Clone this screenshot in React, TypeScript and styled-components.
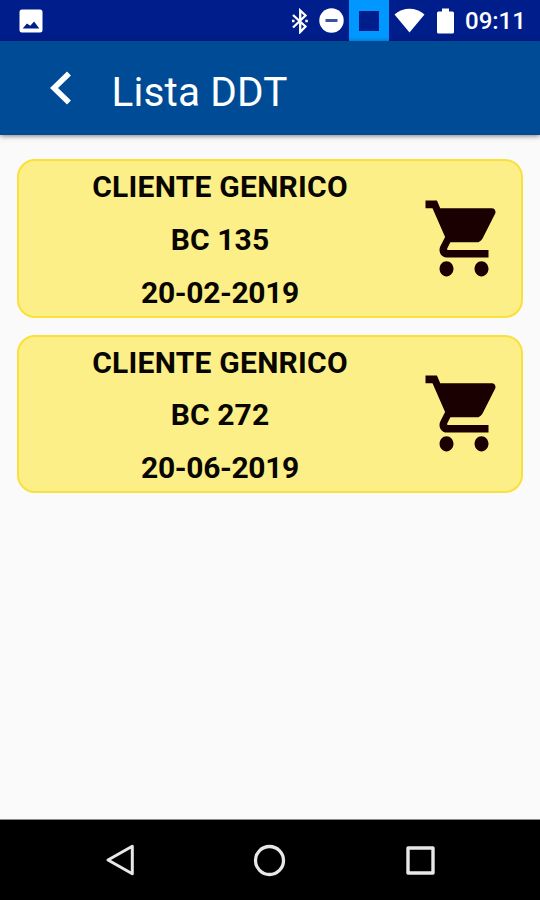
import React from 'react';
import styled, { createGlobalStyle } from 'styled-components';

const GlobalStyle = createGlobalStyle`
  * { box-sizing: border-box; }
  body { margin: 0; background: #fafafa; font-family: Roboto, sans-serif; }
`;

const Screen = styled.div`
  display: flex;
  flex-direction: column;
  width: 540px;
  height: 900px;
  overflow: hidden;
  background: #fafafa;
`;

const StatusBar = styled.div`
  display: flex;
  align-items: center;
  height: 41px;
  flex: none;
  padding-left: 19px;
  background: #001d8c;
  color: #fff;
`;

const StatusIcons = styled.div`
  display: flex;
  align-items: center;
  height: 100%;
  margin-left: auto;
`;

const Glyph = styled.svg<{ $left?: number }>`
  display: block;
  flex: none;
  margin-left: ${(p) => p.$left ?? 0}px;
`;

const RecordTile = styled.div`
  display: flex;
  align-items: center;
  justify-content: center;
  width: 40px;
  height: 41px;
  margin-left: 5px;
  background: #0098ff;
`;

const RecordSquare = styled.div`
  width: 20px;
  height: 20px;
  background: #001d8c;
`;

const Clock = styled.span`
  width: 75px;
  margin-left: 11px;
  padding-top: 2px;
  font-size: 24px;
  font-weight: 500;
  line-height: 39px;
  white-space: nowrap;
`;

const AppBar = styled.header`
  display: flex;
  align-items: center;
  height: 94px;
  flex: none;
  padding-left: 50px;
  background: #004b96;
  color: #fff;
  box-shadow: 0 1px 5px rgba(0, 0, 0, 0.5);
`;

const Title = styled.h1`
  margin: 8px 0 0 39.5px;
  font-size: 40.5px;
  font-weight: 400;
  letter-spacing: 0.15px;
  line-height: 48px;
`;

const List = styled.main`
  display: flex;
  flex: 1;
  flex-direction: column;
  gap: 17px;
  padding: 24px 17px 0;
`;

const Card = styled.article`
  display: flex;
  align-items: center;
  height: 158.5px;
  border: 2px solid #fae03c;
  border-radius: 18px;
  background: #fdef88;
`;

const Details = styled.div`
  display: flex;
  flex-direction: column;
  align-items: center;
  width: 402px;
  padding-top: 4px;
`;

const Line = styled.div<{ $tracking: number }>`
  font-size: 30px;
  font-weight: 700;
  letter-spacing: ${(p) => p.$tracking}px;
  line-height: 52.8px;
  color: #080600;
  white-space: nowrap;
`;

const NavBar = styled.nav`
  display: flex;
  align-items: center;
  height: 81px;
  flex: none;
  padding-left: 104px;
  border-top: 1px solid #8a8a8a;
  background: #000;
`;

const documents = [
  { customer: 'CLIENTE GENRICO', number: 'BC 135', date: '20-02-2019' },
  { customer: 'CLIENTE GENRICO', number: 'BC 272', date: '20-06-2019' },
];

const CartIcon = () => (
  <Glyph $left={0.6} width="84" height="91" viewBox="0 0 24 24" preserveAspectRatio="none" fill="#1a0000">
    <path d="M7 18c-1.1 0-1.99.9-1.99 2S5.9 22 7 22s2-.9 2-2-.9-2-2-2zM1 2v2h2l3.6 7.59-1.35 2.45c-.16.28-.25.61-.25.96 0 1.1.9 2 2 2h12v-2H7.42c-.14 0-.25-.11-.25-.25l.03-.12.9-1.63h7.45c.75 0 1.41-.41 1.75-1.03l3.58-6.49c.08-.14.12-.31.12-.48 0-.55-.45-1-1-1H5.21l-.94-2H1zm16 16c-1.1 0-1.99.9-1.99 2s.89 2 1.99 2 2-.9 2-2-.9-2-2-2z" />
  </Glyph>
);

export default function App() {
  return (
    <Screen>
      <GlobalStyle />
      <StatusBar>
        <Glyph width="24" height="24" viewBox="0 0 24 24">
          <path
            fill="#fff"
            fillRule="evenodd"
            d="M3 .5h18a2.500 2.500 0 0 1 2.500 2.500v18a2.500 2.500 0 0 1-2.500 2.500H3a2.500 2.500 0 0 1-2.500-2.500V3A2.500 2.500 0 0 1 3 .5zM3.700 19.500h16.600l-5.200-7-3.800 4.200-3.400-2.300z"
          />
        </Glyph>
        <StatusIcons>
          <Glyph width="18" height="26" viewBox="0 0 18 26" fill="none" stroke="#fff" strokeWidth="2.3">
            <path d="M2 7 14.500 18.500 9.200 24V2.500l5.300 5L2 19.500" />
            <path d="M1 13h2.500M14.300 13h2.500" />
          </Glyph>
          <Glyph $left={10} width="25" height="25" viewBox="0 0 25 25">
            <circle cx="12.5" cy="12.5" r="12.200" fill="#fff" />
            <path fill="#36549f" d="M6.5 11h12v3h-12z" />
          </Glyph>
          <RecordTile>
            <RecordSquare />
          </RecordTile>
          <Glyph $left={5} width="31" height="25" viewBox="0 0 31 25">
            <path fill="#fff" d="M.5 6.5C9-1.2 22-1.2 30.5 6.5L15.5 24.5z" />
          </Glyph>
          <Glyph $left={12} width="17" height="26" viewBox="0 0 17 26">
            <path fill="#fff" d="M5 .5h7v3h3.5q1.5 0 1.5 1.5v19q0 1.5-1.5 1.5h-14Q0 25.500 0 24V5q0-1.500 1.500-1.500H5z" />
          </Glyph>
          <Clock>09:11</Clock>
        </StatusIcons>
      </StatusBar>
      <AppBar>
        <Glyph width="22" height="36" viewBox="0 0 22 36" fill="none" stroke="#fff" strokeWidth="5.600">
          <path d="M19 3.500 4 18l15 14.500" />
        </Glyph>
        <Title>Lista DDT</Title>
      </AppBar>
      <List>
        {documents.map((doc) => (
          <Card key={doc.number}>
            <Details>
              <Line $tracking={0.25}>{doc.customer}</Line>
              <Line $tracking={0.1}>{doc.number}</Line>
              <Line $tracking={-0.35}>{doc.date}</Line>
            </Details>
            <CartIcon />
          </Card>
        ))}
      </List>
      <NavBar>
        <Glyph width="31" height="34" viewBox="0 0 31 34" fill="none" stroke="#e8e8e8" strokeWidth="3" strokeLinejoin="round">
          <path d="M28.300 3.300v27.400L4 17z" />
        </Glyph>
        <Glyph $left={118} width="33" height="33" viewBox="0 0 33 33" fill="none" stroke="#e8e8e8" strokeWidth="3.300">
          <circle cx="16.500" cy="16.500" r="14" />
        </Glyph>
        <Glyph $left={119} width="31" height="31" viewBox="0 0 31 31" fill="none" stroke="#e8e8e8" strokeWidth="3.400" strokeLinejoin="round">
          <path d="M3 3h25v25H3z" />
        </Glyph>
      </NavBar>
    </Screen>
  );
}
